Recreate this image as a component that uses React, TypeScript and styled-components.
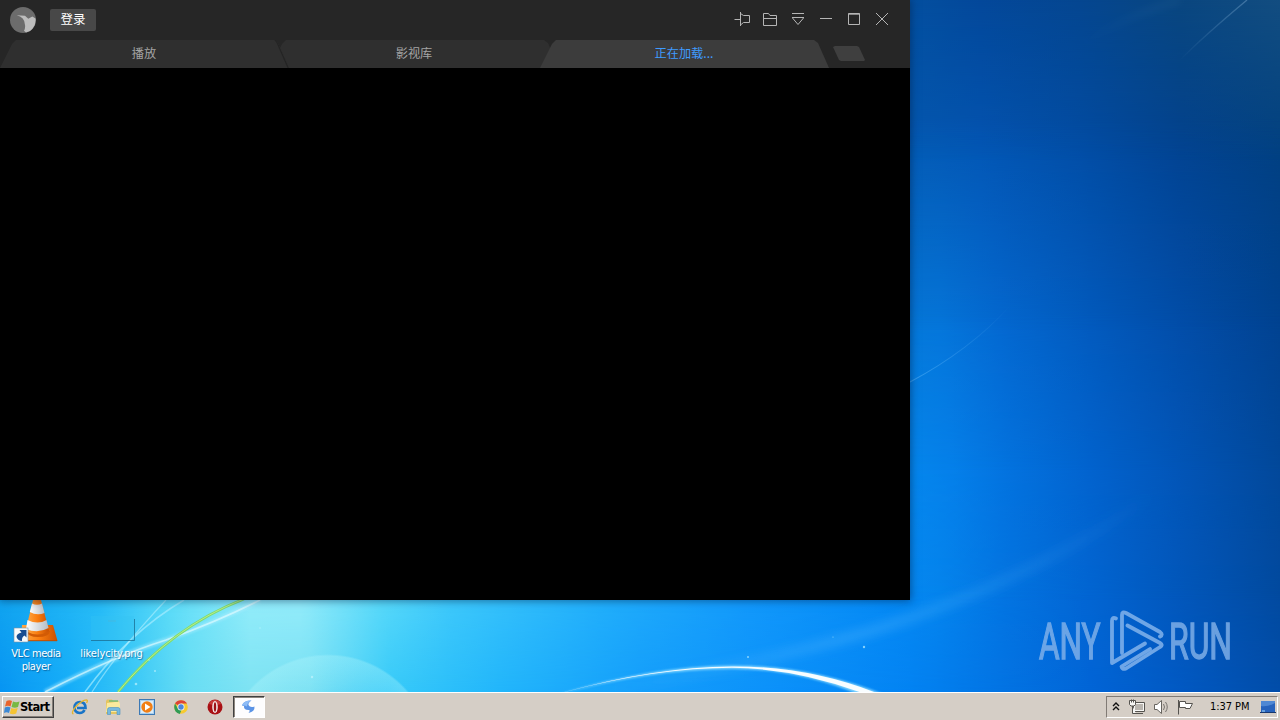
import * as React from "react";
import styled, { createGlobalStyle } from "styled-components";

const GlobalStyle = createGlobalStyle`
  body {
    margin: 0;
    overflow: hidden;
  }

  svg {
    display: block;
  }
`;

const Screen = styled.div`
  display: flex;
  flex-direction: column;
  width: 1280px;
  height: 720px;
  overflow: hidden;
  font-family: "DejaVu Sans Condensed", "DejaVu Sans", "Noto Sans CJK SC", sans-serif;
  cursor: default;
`;

const Desktop = styled.div`
  position: relative;
  flex: 1;
  overflow: hidden;
`;

/* Horizontal colour ramp, solid down to $from and faded out at $to. */
const SkyBand = styled.div<{ $ramp: string; $from?: number; $to?: number }>`
  position: absolute;
  inset: 0;
  background: linear-gradient(to right, ${(p) => p.$ramp});
  ${(p) =>
    p.$to !== undefined && `mask-image: linear-gradient(to bottom, #000 ${p.$from}px, transparent ${p.$to}px);`}
`;

const WallpaperArt = styled.svg`
  position: absolute;
  inset: 0;
`;

const PlayerWindow = styled.div`
  position: absolute;
  top: 0;
  left: 0;
  display: flex;
  flex-direction: column;
  width: 910px;
  height: 600px;
  background: #000;
  box-shadow: 0 0 8px 1px rgba(0, 30, 70, 0.5);
`;

const TitleBar = styled.div`
  display: flex;
  align-items: center;
  height: 40px;
  padding: 0 18px 0 10px;
  box-sizing: border-box;
  background: #262626;
`;

const LoginButton = styled.button`
  width: 46px;
  height: 22px;
  margin-left: 14px;
  padding: 0 0 2px;
  border: 0;
  border-radius: 2px;
  background: #484848;
  color: #fff;
  font: 12.5px/20px "Noto Sans CJK SC", sans-serif;
`;

const WindowControls = styled.div`
  display: flex;
  gap: 8px;
  margin-left: auto;
  margin-top: -2px;
`;

const TabStrip = styled.div`
  display: flex;
  height: 28px;
  background: #262626;
`;

const Tab = styled.div<{ $active?: boolean; $raised?: boolean }>`
  position: relative;
  z-index: ${(p) => (p.$active || p.$raised ? 1 : 0)};
  width: 290px;
  height: 28px;
  margin-right: -20px;
  flex: none;
  background: ${(p) => (p.$active ? "#3c3c3c" : "#2f2f2f")};
  clip-path: polygon(0 100%, 12px 4px, 16px 0, 274px 0, 278px 3px, 289px 100%);
  color: ${(p) => (p.$active ? "#3f9bff" : "#a4a4a4")};
  font: 12.2px/27px "Noto Sans CJK SC", sans-serif;
  text-align: center;
  text-indent: -2px;

  /* dark slanted edge where the next tab slides underneath */
  &::after {
    content: "";
    display: ${(p) => (p.$raised ? "block" : "none")};
    position: absolute;
    inset: 0;
    background: #242424;
    clip-path: polygon(275px 0, 278px 3px, 289px 100%, 287.5px 100%, 277px 4px);
  }
`;

const NewTab = styled.div`
  width: 32px;
  height: 15px;
  margin: 6px 0 0 23px;
  background: #3f3f3f;
  clip-path: polygon(0 1px, 2px 0, 24px 0, 26px 1px, 32px 14px, 31px 100%, 8px 100%, 6px 14px);
`;

const Shortcuts = styled.div`
  position: absolute;
  top: 598px;
  left: 0;
  display: flex;
`;

const Shortcut = styled.div<{ $width: number }>`
  display: flex;
  flex-direction: column;
  align-items: center;
  width: ${(p) => p.$width}px;
`;

const ShortcutLabel = styled.div<{ $tracking: number }>`
  margin-top: 3px;
  color: #fff;
  font-size: 11px;
  line-height: 13px;
  letter-spacing: ${(p) => p.$tracking}px;
  text-align: center;
  text-shadow: 1px 1px 1px rgba(0, 60, 110, 0.6);
`;

const Watermark = styled.svg`
  position: absolute;
  top: 600px;
  left: 1030px;
`;

const Taskbar = styled.div`
  display: flex;
  align-items: center;
  height: 28px;
  padding: 0 2px;
  box-sizing: border-box;
  border-top: 1px solid #fff;
  background: #d5cec6;
  color: #000;
`;

const StartButton = styled.button`
  display: flex;
  align-items: center;
  width: 52px;
  height: 22px;
  padding: 0 0 0 1px;
  box-sizing: border-box;
  border: 1px solid;
  border-color: #fff #404040 #404040 #fff;
  box-shadow: inset -1px -1px #857f79;
  background: #d5cec6;
  font: bold 11.5px "DejaVu Sans", sans-serif;
  letter-spacing: -0.7px;
  white-space: nowrap;
`;

const QuickLaunch = styled.div`
  display: flex;
  gap: 15.7px;
  margin-left: 17px;
`;

const RunningTask = styled.div`
  display: flex;
  justify-content: center;
  align-items: center;
  width: 32px;
  height: 22px;
  margin-left: 9px;
  box-sizing: border-box;
  border: 1px solid;
  border-color: #404040 #fff #fff #404040;
  box-shadow: inset 1px 1px #8d8780;
  background: #fdfdfe;
`;

const Tray = styled.div`
  display: flex;
  align-items: center;
  width: 172px;
  height: 22px;
  margin-left: auto;
  box-sizing: border-box;
  border: 1px solid;
  border-color: #817b75 #fff #fff #817b75;
`;

const Clock = styled.span`
  width: 42px;
  margin-left: 16px;
  font-size: 11px;
  letter-spacing: -0.05px;
  white-space: nowrap;
`;

const TrayIcon = styled.svg<{ $gap: number }>`
  flex: none;
  margin-left: ${(p) => p.$gap}px;
`;

const Wallpaper = () => (
  <>
    <SkyBand $ramp="#0795f3, #16aef9 70px, #38c7f7 130px, #69def4 190px, #7ee3f3 250px, #78e0f3 310px, #37caf9 390px, #22b6fb 500px, #149efb 640px, #0b91fa 780px, #0383f3 910px, #0374e4 1000px, #0265d7 1090px, #0259c3 1180px, #024da9 1280px" />
    <SkyBand
      $ramp="#12a5ef, #28bcf6 100px, #5cdcf8 170px, #94edfb 250px, #95ecfb 300px, #5cdaf9 380px, #40c9fb 450px, #23b0fb 600px, #1399fb 750px, #068bf5 880px, #0484ed 940px, #0375e2 1000px, #0265d2 1090px, #0257bb 1180px, #024a9f 1280px"
      $from={590}
      $to={692}
    />
    <SkyBand
      $ramp="#0586ec 910px, #0580ea 950px, #0372de 1010px, #0263ce 1090px, #0255b7 1180px, #02489a 1280px"
      $from={460}
      $to={600}
    />
    <SkyBand
      $ramp="#0577d8 910px, #0575d9 940px, #0468d0 1000px, #025abd 1090px, #024da8 1180px, #014290 1280px"
      $from={315}
      $to={470}
    />
    <SkyBand
      $ramp="#0458b1 910px, #0354b1 980px, #024ca3 1080px, #02428f 1180px, #014080 1280px"
      $from={120}
      $to={330}
    />
    <SkyBand
      $ramp="#034f9f 910px, #03489a 980px, #044690 1080px, #09467f 1180px, #124d80 1280px"
      $from={0}
      $to={160}
    />
    <WallpaperArt width="1280" height="692">
      <defs>
        <filter id="soft" x="-20%" y="-50%" width="140%" height="200%">
          <feGaussianBlur stdDeviation="1" />
        </filter>
        <filter id="haze" x="-20%" y="-50%" width="140%" height="200%">
          <feGaussianBlur stdDeviation="4" />
        </filter>
        <linearGradient id="ray" x1="0" x2="1">
          <stop offset="0" stopColor="#5cbcff" stopOpacity="0" />
          <stop offset=".45" stopColor="#5cbcff" stopOpacity=".28" />
          <stop offset="1" stopColor="#5cbcff" stopOpacity="0" />
        </linearGradient>
        <linearGradient id="thin" x1="0" x2="1">
          <stop offset="0" stopColor="#7cc8ff" stopOpacity=".4" />
          <stop offset="1" stopColor="#7cc8ff" stopOpacity="0" />
        </linearGradient>
        <linearGradient id="corner" x1="0" x2="1">
          <stop offset="0" stopColor="#88b4d8" stopOpacity="0" />
          <stop offset="1" stopColor="#88b4d8" stopOpacity=".4" />
        </linearGradient>
        <radialGradient id="bubble" cx=".5" cy=".5" r=".5">
          <stop offset=".6" stopColor="#b5f7fc" stopOpacity=".05" />
          <stop offset=".98" stopColor="#b5f7fc" stopOpacity=".32" />
          <stop offset="1" stopColor="#b5f7fc" stopOpacity="0" />
        </radialGradient>
      </defs>
      <circle cx="328" cy="760" r="106" fill="url(#bubble)" />
      <g fill="none">
        <path d="M85 692Q128 633 184 600" stroke="#a5ecff" strokeWidth="1.5" opacity=".7" />
        <path d="M92 692Q118 651 166 600" stroke="#b9f3ff" strokeWidth="1.2" opacity=".55" />
        <path d="M45 692Q115 656 166 640Q219 621 260 600" stroke="#b5efff" strokeWidth="5" filter="url(#soft)" opacity=".45" />
        <path d="M45 692Q115 656 166 640Q219 621 260 600" stroke="#e2fcff" strokeWidth="1.8" opacity=".65" />
        <path d="M118 692C151 652 192 619 244 599" stroke="#80dc6c" strokeWidth="2.6" />
        <path d="M118 692C151 652 192 619 244 599" stroke="#c6ee94" strokeWidth=".8" />
        <path d="M600 692Q740 668 868 632Q1035 580 1155 493" stroke="url(#ray)" strokeWidth="12" filter="url(#haze)" />
        <path d="M910 382Q970 350 1010 306" stroke="url(#thin)" strokeWidth="1.1" />
        <path d="M1070 52Q1118 18 1180 0" stroke="url(#corner)" strokeWidth="3" opacity=".4" filter="url(#haze)" />
        <path d="M1180 60Q1205 35 1247 0" stroke="url(#corner)" strokeWidth="1.3" />
      </g>
      <path d="M552 696Q650 666 732 665.500Q812 665 888 696H862Q800 669 732 669Q650 669 552 696Z" fill="#8fdcff" filter="url(#soft)" opacity=".9" />
      <path d="M552 695.500Q650 667 732 666.400Q812 666 884 696H870Q800 668.500 732 667.800Q650 668 552 695.500Z" fill="#fff" opacity=".95" />
      <g fill="#c8f5ff" opacity=".65">
        <circle cx="136" cy="684" r="1.3" />
        <circle cx="155" cy="671" r="1" />
        <circle cx="149" cy="660" r=".8" />
        <circle cx="312" cy="677" r="1.2" />
        <circle cx="748" cy="657" r="1" />
        <circle cx="864" cy="647" r="1.2" />
        <circle cx="833" cy="637" r=".6" />
        <circle cx="260" cy="628" r=".7" />
      </g>
    </WallpaperArt>
  </>
);

const BirdLogo = () => (
  <svg width="26" height="26" viewBox="0 0 26 26">
    <circle cx="13" cy="13" r="13" fill="#6c6c6c" />
    <path
      d="M6.700 8.300L15 8.800L18.300 11.800L22.300 9.500L25.500 11.500Q26.200 17 22.500 21.800Q20 25 16 25.600L14 23.700Q15.500 21 15 18Q15 14 12.700 11.500Q10.500 9 6.700 8.300Z"
      fill="#bdbdbd"
    />
  </svg>
);

const CONTROL_PATHS: { label: string; d: string }[] = [
  { label: "Pin", d: "M2.500 10.500H8M8.500 3V17M8.500 4.500L11.500 6.500H17.500V13.500H11.500L8.500 16" },
  { label: "Open", d: "M3.500 16.500V4.500H8.500L10 6.500H16.500V16.500ZM3.500 9.500H16.500" },
  { label: "Menu", d: "M4 4.500H16M4 8.500H16M4.500 9L10 15.500L15.500 9" },
  { label: "Minimize", d: "M4 9.500H16" },
  { label: "Maximize", d: "M4.500 4.500H15.500V15.500H4.500ZM4 5.200H16" },
  { label: "Close", d: "M4 4L16 16M16 4L4 16" },
];

const VlcCone = () => (
  <svg width="48" height="46" viewBox="12 598 48 46">
    <defs>
      <linearGradient id="cone" x1="0" x2="1">
        <stop offset="0" stopColor="#ffac4a" />
        <stop offset=".5" stopColor="#fa7e10" />
        <stop offset="1" stopColor="#c75003" />
      </linearGradient>
      <linearGradient id="coneWhite" x1="0" x2="1">
        <stop offset="0" stopColor="#fff" />
        <stop offset="1" stopColor="#b5bdc4" />
      </linearGradient>
    </defs>
    <path d="M22 625H53L57.500 641H21Z" fill="url(#cone)" />
    <path d="M26 631H50Q49 637 38 637Q28 637 26 631Z" fill="#d25b05" />
    <path d="M33.500 598H40.500L49 631Q38 638 25.500 631Z" fill="url(#cone)" />
    <path d="M32 603.500Q37 606 42 603.500L44.500 613Q37 616 29.800 612Z" fill="url(#coneWhite)" />
    <path d="M27.500 620Q38 625 46.500 620L48.500 628Q38 634 26 629Z" fill="url(#coneWhite)" />
    <path d="M22 640.700H57" stroke="#b94d05" />
    <rect x="14" y="628" width="14" height="14" fill="#f5fafc" stroke="#7b91a3" strokeWidth=".6" />
    <path d="M19.500 630H26.500V637.500L24.500 635.500Q21.500 637 22 641Q18 641 16.500 637Q16.500 633.500 21.500 632.500Z" fill="#174d91" />
  </svg>
);

const BlankPicture = () => (
  <svg width="48" height="46" viewBox="0 0 48 46">
    <rect x="3" y="18" width="43" height="24" fill="#34c3f2" opacity=".3" />
    <path d="M3 42.500H46.500V21" fill="none" stroke="#1c7195" opacity=".8" />
    <path d="M20 23H28" stroke="#6ca9b9" strokeWidth=".7" opacity=".5" />
  </svg>
);

const AnyRunMark = () => (
  <Watermark width="250" height="80" viewBox="1030 600 250 80">
    <g fill="#86b4ea" stroke="#86b4ea" strokeWidth="1.5" opacity=".8" fontFamily="Roboto, sans-serif" fontSize="50.500">
      <text x="1039" y="659" textLength="61.500" lengthAdjust="spacingAndGlyphs">
        ANY
      </text>
      <text x="1169" y="659" textLength="63" lengthAdjust="spacingAndGlyphs">
        RUN
      </text>
    </g>
    <g fill="none" stroke="#82b3ec" strokeWidth="3.800" strokeLinejoin="round" strokeLinecap="round" opacity=".85">
      <path d="M1116 618.500Q1112 616.500 1112 621V663L1145 643.500" />
      <path d="M1122 653V615Q1122 611 1126 613L1160 632Q1163.500 634.500 1160 636.500" />
      <path d="M1127.500 625.500L1160 643Q1163.500 645 1160 647L1126 668.500Q1122 670 1121.500 666.500L1150 649" />
    </g>
  </Watermark>
);

const WindowsFlag = () => (
  <svg width="16" height="16" viewBox="0 0 16 16">
    <path d="M2.500 2Q5.500 .5 8 2L6.500 7.500Q4 6 1 7.500Z" fill="#e9642c" />
    <path d="M9 2.500Q12 4 15.500 2.500L14 8Q11 9.500 7.500 8Z" fill="#78b944" />
    <path d="M.8 8.500Q4 7 6.500 8.500L5 14Q2.500 12.500 0 14Z" fill="#3c89d5" />
    <path d="M7.300 9Q10 10.500 13.700 9L12.200 14.500Q9 16 5.800 14.500Z" fill="#f5c433" />
  </svg>
);

const InternetExplorer = () => (
  <svg width="18" height="18" viewBox="0 0 18 18">
    <path d="M13.500 12Q12 15 8.700 15Q3.500 14.500 3.500 9.500Q4 4 9 4Q14.500 4 14.500 10H6" fill="none" stroke="#1974c7" strokeWidth="2.700" />
    <path d="M5 8Q6 5.700 9 5.300" stroke="#83d5f8" fill="none" />
    <path d="M2.500 16Q-.5 15 5 8.500Q11 2 15.500 1.800Q17.300 2 15.500 5" fill="none" stroke="#e4b42e" strokeWidth="1.300" />
  </svg>
);

const Explorer = () => (
  <svg width="18" height="18" viewBox="0 0 18 18">
    <path d="M1 3L2 1.500H7L8 3H14V16H1Z" fill="#e5c55f" />
    <path d="M2 5L14 3.500L15 6V14H1Z" fill="#fbea9d" />
    <path d="M4 3H13" stroke="#75bb77" strokeWidth="1.500" />
    <path d="M2.500 16.500V11.500Q2.500 9.500 4.500 9.500H13Q15 9.500 15 11.500V16.500H12V12.500H5.500V16.500Z" fill="#77b9df" stroke="#4c91bd" strokeWidth=".6" />
  </svg>
);

const MediaPlayer = () => (
  <svg width="18" height="18" viewBox="0 0 18 18">
    <rect x="1.500" y="1.500" width="15" height="15" fill="#a9d0ef" stroke="#3c79b5" />
    <rect x="3" y="3" width="12" height="12" fill="#dcecf8" />
    <circle cx="9" cy="9" r="5.700" fill="#f17f15" />
    <path d="M7 5.500L12.500 9L7 12.500Z" fill="#fff" />
  </svg>
);

const Chrome = () => (
  <svg width="18" height="18" viewBox="0 0 18 18">
    <circle cx="9" cy="9" r="6.800" fill="#f6ca2f" />
    <path d="M9 9L3 5.400Q5 2.200 9 2.200Q13 2.200 15.100 5.600H9Z" fill="#dc4337" />
    <path d="M3 5.400L6 10.700L9.500 12L7.800 15.900Q2.200 14.500 2.200 9Q2.200 7 3 5.400Z" fill="#309b55" />
    <circle cx="9" cy="9" r="3.500" fill="#f4f4f4" />
    <circle cx="9" cy="9" r="2.700" fill="#4b87dc" />
  </svg>
);

const Opera = () => (
  <svg width="18" height="18" viewBox="0 0 18 18">
    <circle cx="9" cy="9" r="7.500" fill="#a91014" />
    <path d="M3 6Q5 2 9 2Q13 2 15 6Q9 8 3 6Z" fill="#d44c49" opacity=".7" />
    <ellipse cx="9" cy="9" rx="2.800" ry="5.900" fill="#f2e7e7" />
    <ellipse cx="9" cy="9" rx="1.200" ry="4.700" fill="#9c1116" />
  </svg>
);

const PlayerTaskIcon = () => (
  <svg width="16" height="16" viewBox="0 0 16 16">
    <path d="M1 6.500Q2.500 1.500 10.500 1.500Q7 3.500 7.500 6Q9 9 13.500 7.500Q14 12.500 7.500 14Q9 12.500 8.500 11Q2.500 11.500 3 7Z" fill="#5b94e6" />
    <path d="M1 6.500Q2.500 1.500 10.500 1.500Q6 3.500 6 7.500Q4 6 1 6.500Z" fill="#8dbcf6" />
  </svg>
);

const App = () => (
  <>
    <GlobalStyle />
    <Screen>
      <Desktop>
        <Wallpaper />
        <Shortcuts>
          <Shortcut $width={72}>
            <VlcCone />
            <ShortcutLabel $tracking={-0.4}>
              VLC media
              <br />
              player
            </ShortcutLabel>
          </Shortcut>
          <Shortcut $width={79}>
            <BlankPicture />
            <ShortcutLabel $tracking={-0.1}>likelycity.png</ShortcutLabel>
          </Shortcut>
        </Shortcuts>
        <AnyRunMark />
        <PlayerWindow>
          <TitleBar>
            <BirdLogo />
            <LoginButton>登录</LoginButton>
            <WindowControls>
              {CONTROL_PATHS.map(({ label, d }) => (
                <svg key={label} aria-label={label} width="20" height="20" viewBox="0 0 20 20">
                  <path d={d} fill="none" stroke="#b5b5b5" />
                </svg>
              ))}
            </WindowControls>
          </TitleBar>
          <TabStrip>
            <Tab $raised>播放</Tab>
            <Tab>影视库</Tab>
            <Tab $active>正在加载...</Tab>
            <NewTab />
          </TabStrip>
        </PlayerWindow>
      </Desktop>
      <Taskbar>
        <StartButton>
          <WindowsFlag />
          Start
        </StartButton>
        <QuickLaunch>
          <InternetExplorer />
          <Explorer />
          <MediaPlayer />
          <Chrome />
          <Opera />
        </QuickLaunch>
        <RunningTask>
          <PlayerTaskIcon />
        </RunningTask>
        <Tray>
          <TrayIcon $gap={5} width="8" height="12" viewBox="0 0 8 12">
            <path d="M1 5L4 2L7 5M1 9L4 6L7 9" fill="none" stroke="#111" strokeWidth="1.400" />
          </TrayIcon>
          <TrayIcon $gap={9} width="16" height="16" viewBox="0 0 16 16">
            <path d="M4.500 3.500H15.500V12.500H4.500ZM7 14.500H14" fill="#f7f7f5" stroke="#55534f" />
            <rect x="6" y="5" width="8" height="6" fill="#bab6b0" />
            <path d="M.5 1.500H6.500V5.500L5 7H2L.5 5.500ZM2.500 .5V3.500M4.500 .5V3.500M3.500 7V14.500H7" fill="#f7f7f5" stroke="#55534f" />
          </TrayIcon>
          <TrayIcon $gap={8} width="17" height="16" viewBox="0 0 17 16">
            <path d="M1.500 5.500H4L8.500 1.500V14.500L4 10.500H1.500Z" fill="#fff" stroke="#686560" />
            <path d="M10.500 5Q12.500 8 10.500 11M12.500 3Q16 8 12.500 13" fill="none" stroke="#77736e" />
          </TrayIcon>
          <TrayIcon $gap={7} width="17" height="16" viewBox="0 0 17 16">
            <path d="M1.500 1V15.500M2.500 2.500H8.500V4.500H15.500L13 9.500H8.500V8.500H2.500Z" fill="#fff" stroke="#55534f" />
          </TrayIcon>
          <Clock>1:37 PM</Clock>
          <TrayIcon $gap={8} width="16" height="14" viewBox="0 0 16 14">
            <path d="M1 1H15V12H1Z" fill="#2763bd" />
            <path d="M1 1H15V3Q8 7 1 6Z" fill="#4f88d4" />
            <path d="M0 12H16V13H0Z" fill="#18386e" />
            <path d="M2 11H5" stroke="#a7dfff" />
          </TrayIcon>
        </Tray>
      </Taskbar>
    </Screen>
  </>
);

export default App;
